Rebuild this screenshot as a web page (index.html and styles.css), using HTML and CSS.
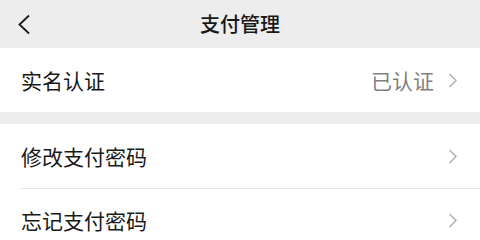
FILE: index.html
```html
<!DOCTYPE html>
<html lang="zh-CN">
<head>
<meta charset="utf-8">
<title>支付管理</title>
<link rel="stylesheet" href="styles.css">
</head>
<body>
<header class="nav">
  <div class="nav-left">
    <svg class="back" width="14" height="21" viewBox="0 0 14 21"><path d="M12 1.5 L2.5 10.5 L12 19.5" fill="none" stroke="#1a1a1a" stroke-width="1.8" stroke-linejoin="miter"/></svg>
  </div>
  <div class="nav-title">支付管理</div>
  <div class="nav-right"></div>
</header>
<section class="group">
  <div class="cell">
    <span class="label">实名认证</span>
    <span class="value">已认证</span>
    <svg class="arrow" width="10" height="15" viewBox="0 0 10 15"><path d="M1.5 1 L8 7.5 L1.5 14" fill="none" stroke="#b2b2b2" stroke-width="1.5"/></svg>
  </div>
</section>
<section class="group">
  <div class="cell">
    <span class="label">修改支付密码</span>
    <svg class="arrow" width="10" height="15" viewBox="0 0 10 15"><path d="M1.5 1 L8 7.5 L1.5 14" fill="none" stroke="#b2b2b2" stroke-width="1.5"/></svg>
  </div>
  <div class="cell">
    <span class="label">忘记支付密码</span>
    <svg class="arrow" width="10" height="15" viewBox="0 0 10 15"><path d="M1.5 1 L8 7.5 L1.5 14" fill="none" stroke="#b2b2b2" stroke-width="1.5"/></svg>
  </div>
</section>
</body>
</html>
```
FILE: styles.css
```css
html, body {
  margin: 0;
  padding: 0;
  background: #ededed;
  font-family: "Noto Sans CJK SC", "Noto Sans", sans-serif;
  color: #191919;
}
.nav {
  height: 48px;
  display: grid;
  grid-template-columns: 1fr auto 1fr;
  align-items: center;
  background: #ededed;
}
.nav-left {
  display: flex;
  align-items: center;
  padding-left: 17px;
}
.back { display: block; }
.nav-title {
  font-size: 20px;
  font-weight: 500;
  color: #191919;
  line-height: 1;
}
.group {
  background: #fff;
  margin-bottom: 12px;
}
.cell {
  height: 64px;
  display: flex;
  align-items: center;
  padding: 0 22px 0 21px;
}
.cell + .cell {
  height: 63px;
  padding-top: 1px;
  background: linear-gradient(#e5e5e5, #e5e5e5) 20px 0 / calc(100% - 20px) 1px no-repeat;
}
.label {
  flex: 1;
  font-size: 21px;
  line-height: 1;
}
.value {
  font-size: 21px;
  line-height: 1;
  color: #808080;
  margin-right: 14px;
}
.arrow { display: block; }
```
